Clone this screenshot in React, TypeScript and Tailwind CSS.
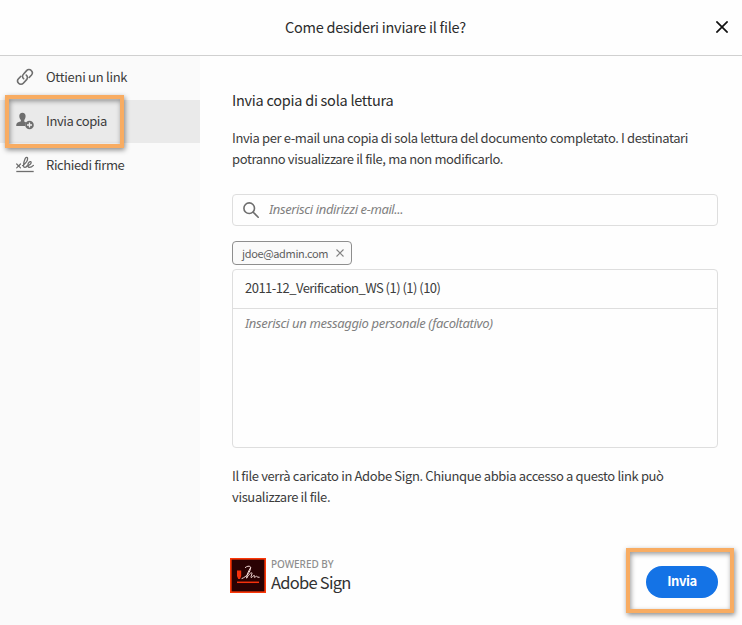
import { useState } from 'react';
import type { ReactNode } from 'react';

interface NavItem {
  id: string;
  label: string;
  labelClass: string;
  icon: ReactNode;
}

const LinkIcon = () => (
  <svg className="w-[18px] h-[18px]" viewBox="0 0 18 18" fill="none" stroke="#6e6e6e" strokeWidth="1.6" strokeLinecap="round">
    <path d="M7.6 10.7a3.1 3.1 0 0 1-.2-4.5l3.2-3.6a3.1 3.1 0 0 1 4.7 0c1.3 1.3 1.3 3.1.2 4.4l-2.3 2.5" />
    <path d="M10.3 7.1a3.1 3.1 0 0 1 .3 4.5l-3.3 3.6a3.1 3.1 0 0 1-4.7 0c-1.3-1.3-1.3-3.1-.1-4.4l2.4-2.5" />
  </svg>
);

const SendCopyIcon = () => (
  <svg className="w-[18px] h-[18px]" viewBox="0 0 18 18">
    <path
      fill="#6e6e6e"
      d="M6.4.7C8.5.7 9.6 2.1 9.6 4c0 1.6-.6 3.1-1.3 4v1.3c0 .4.3.6.7.7l1.5.5a5 5 0 0 0-1.4 3.5H.2c0-2.4.6-3.2 2-3.7l2.1-.7c.4-.1.6-.3.6-.7V8C4 7.1 3.3 5.6 3.3 4 3.3 2.1 4.4.7 6.4.7z"
    />
    <circle cx="13.5" cy="13" r="4.3" fill="#6e6e6e" />
    <path d="M13.5 10.5v5M11 13h5" stroke="#f0f0f0" strokeWidth="1.3" />
  </svg>
);

const SignatureIcon = () => (
  <svg className="w-[18px] h-[18px]" viewBox="0 0 18 18" fill="none" stroke="#6e6e6e" strokeLinecap="round" strokeLinejoin="round">
    <path d="M.7 8l3.8 3.8M4.5 8L.7 11.8" strokeWidth="1.2" />
    <path
      strokeWidth="1.3"
      d="M6.6 9.6c2.8-2 5.2-5 5-7.200-.2-1.500-1.800-1.100-2.500.4-1 2.200-1.700 4.800-1.600 6.900.1 2.400 2 2.200 3.600.3"
    />
    <path strokeWidth="1.3" d="M11.100 10c2.200-.7 4.200-2.400 4-3.800-.2-1.100-1.900-.7-2.700.9-.9 2-.6 4.300 1 4.300 1.400 0 2.900-.8 4-2" />
    <path d="M.3 15.500h17.400" strokeWidth="1.300" strokeLinecap="butt" />
  </svg>
);

const AdobeSignLogo = () => (
  <svg className="w-9 h-[35px]" viewBox="0 0 36 35" fill="none">
    <rect x=".75" y=".75" width="34.5" height="33.5" fill="#2a0203" stroke="#fb3708" strokeWidth="1.8" />
    <path d="M7 12.5h4.200v5.500l-1.200 3H8.200L7 18z" fill="#f5310c" />
    <path d="M7 24.300h22" stroke="#f5310c" strokeWidth="1.500" />
    <path
      d="M12 20.500c4.500-1.500 8.500-7 8.600-10.800 0-2.200-3.400-1.900-5.300-.2M20.600 9.700c-1.900 3-3.900 7-4 10.500 1.800-3.300 4.300-5.800 5.200-5.400.9.500-1.400 3.800-.6 4.700.8.500 2-2.100 2.900-2.300.9.100-.3 2.200.5 2.300.7 0 1-1.300 1.700-1.300.6 0 .4 1.300 2.900 1.100"
      stroke="#f7dcd8"
      strokeWidth="1"
      strokeLinecap="round"
      strokeLinejoin="round"
    />
  </svg>
);

const navItems: NavItem[] = [
  { id: 'link', label: 'Ottieni un link', labelClass: 'tracking-[-0.28px]', icon: <LinkIcon /> },
  { id: 'copy', label: 'Invia copia', labelClass: 'tracking-[-0.42px]', icon: <SendCopyIcon /> },
  { id: 'sign', label: 'Richiedi firme', labelClass: 'tracking-[-0.38px]', icon: <SignatureIcon /> },
];

export default function App() {
  const [active, setActive] = useState('copy');
  const [recipients, setRecipients] = useState(['jdoe@admin.com']);

  const removeRecipient = (email: string) => {
    setRecipients(recipients.filter((r) => r !== email));
  };

  return (
    <div className="relative w-[742px] h-[625px] flex flex-col overflow-hidden bg-[#fefefe] font-['Noto_Sans_CJK_JP','Noto_Sans',sans-serif] text-[13px] text-[#3c3c3c]">
      {/* Header */}
      <header className="h-14 shrink-0 flex items-center border-b border-[#d0d0d0] pl-[285px] pr-3 pb-0.5">
        <h1 className="flex-1 text-[14.5px] leading-5 tracking-[-0.26px] text-[#2c2c2c] whitespace-nowrap">Come desideri inviare il file?</h1>
        <button aria-label="Chiudi" className="w-4 h-4 flex items-center justify-center">
          <svg className="w-3 h-3" viewBox="0 0 12 12" stroke="#111" strokeWidth="1.7">
            <path d="M.4.4l11.200 11.200M11.600.4L.4 11.600" />
          </svg>
        </button>
      </header>

      <div className="flex-1 flex min-h-0">
        {/* Sidebar */}
        <nav className="w-[200px] shrink-0 bg-[#fafafa]">
          {navItems.map((item) => (
            <button
              key={item.id}
              onClick={() => setActive(item.id)}
              className={`w-full flex items-center gap-3 pl-4 pb-0.5 text-left ${active === item.id ? 'h-[43px] mb-px bg-[#eaeaea]' : 'h-11'}`}
            >
              {item.icon}
              <span className={`leading-5 whitespace-nowrap ${item.labelClass}`}>{item.label}</span>
            </button>
          ))}
        </nav>

        {/* Content */}
        <main className="flex-1 flex flex-col pl-8 pr-6 pt-[34px]">
          <h2 className="text-[14.5px] leading-5 tracking-[-0.26px] text-[#2c2c2c]">Invia copia di sola lettura</h2>
          <p className="mt-[17px] leading-[21px] tracking-[-0.38px] whitespace-nowrap">
            Invia per e-mail una copia di sola lettura del documento completato. I destinatari
            <br />
            potranno visualizzare il file, ma non modificarlo.
          </p>

          <div className="mt-[25px] h-8 shrink-0 flex items-center gap-[10px] border border-[#dedede] rounded-[4px] pl-[10px]">
            <svg className="w-4 h-4 shrink-0" viewBox="0 0 16 16" fill="none" stroke="#6e6e6e" strokeWidth="1.6" strokeLinecap="round">
              <circle cx="6.2" cy="6.2" r="5.3" />
              <path d="M10.200 10.200l5 5" />
            </svg>
            <input
              type="text"
              placeholder="Inserisci indirizzi e-mail..."
              className="flex-1 font-['Noto_Sans',sans-serif] italic text-[13px] tracking-[-0.38px] placeholder:text-[#808080] outline-none"
            />
          </div>

          <div className="mt-[15px] h-6 flex shrink-0">
            {recipients.map((email) => (
              <div key={email} className="w-[120px] flex items-center justify-between border border-[#8e8e8e] rounded-[4px] bg-[#fafafa] pl-[9px] pr-[7px] text-[11px] text-[#5e5e5e]">
                <span className="leading-4 pb-px tracking-[-0.35px]">{email}</span>
                <button aria-label="Rimuovi" onClick={() => removeRecipient(email)}>
                  <svg className="w-2 h-2" viewBox="0 0 8 8" stroke="#808080" strokeWidth="1.1">
                    <path d="M.5.5l7 7M7.500.5l-7 7" />
                  </svg>
                </button>
              </div>
            ))}
          </div>

          <div className="mt-1 h-[179px] shrink-0 flex flex-col border border-[#dedede] rounded-[4px]">
            <div className="h-[39px] shrink-0 flex items-center border-b border-[#dedede] px-3 pb-0.5">
              <span className="leading-5 tracking-[-0.52px]">2011-12_Verification_WS (1) (1) (10)</span>
            </div>
            <textarea
              placeholder="Inserisci un messaggio personale (facoltativo)"
              className="flex-1 resize-none px-3 pt-1 font-['Noto_Sans',sans-serif] italic text-[13px] leading-5 tracking-[-0.35px] placeholder:text-[#808080] outline-none"
            />
          </div>

          <p className="mt-[17px] leading-[21px] tracking-[-0.36px] whitespace-nowrap">
            Il file verrà caricato in Adobe Sign. Chiunque abbia accesso a questo link può
            <br />
            visualizzare il file.
          </p>

          <footer className="mt-[51px] flex items-start justify-between">
            <div className="-ml-0.5 flex items-start gap-[5px]">
              <AdobeSignLogo />
              <div className="whitespace-nowrap">
                <div className="font-['Noto_Sans',sans-serif] text-[10px] leading-[13px] tracking-[-0.05px] font-medium text-[#8e8e8e]">POWERED BY</div>
                <div className="text-[16.5px] leading-[22px] tracking-[-0.75px] text-[#323232]">Adobe Sign</div>
              </div>
            </div>
            <button className="mt-2 w-[72px] h-8 pb-0.5 rounded-full bg-[#1473e6] text-white text-[13px] font-bold tracking-[-0.4px]">Invia</button>
          </footer>
        </main>
      </div>

      {/* Step highlights */}
      <div className="absolute left-[5px] top-[95px] w-[119px] h-[53px] border-4 border-[#f8ac62] shadow-[1px_2px_5px_rgba(0,0,0,0.45),inset_1px_2px_5px_rgba(0,0,0,0.4)] pointer-events-none" />
      <div className="absolute left-[626px] top-[548px] w-[108px] h-[65px] border-4 border-[#f8ac62] shadow-[1px_2px_5px_rgba(0,0,0,0.45),inset_1px_2px_5px_rgba(0,0,0,0.4)] pointer-events-none" />
    </div>
  );
}
